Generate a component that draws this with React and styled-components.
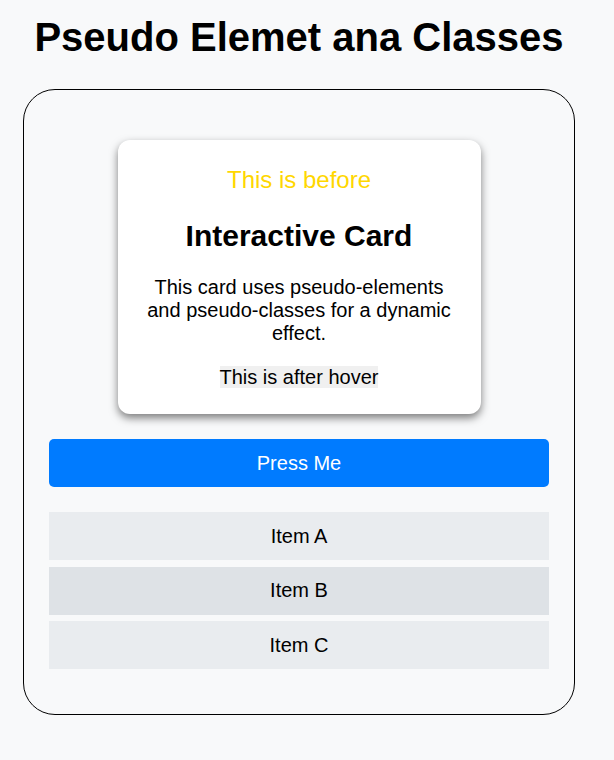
import styled, { createGlobalStyle } from 'styled-components'

// Page-wide defaults
const GlobalStyle = createGlobalStyle`
  html, body {
    margin: 0;
    padding: 0;
    background: #f8f9fa;
    font-family: 'Liberation Sans', Arial, sans-serif;
  }
`

const Page = styled.div`
  width: 598px;
  display: flex;
  flex-direction: column;
  align-items: center;
`

const Heading = styled.h1`
  font-size: 40px;
  font-weight: bold;
  color: #000;
  margin: 15px 0 29px;
  line-height: normal;
`

const Container = styled.div`
  box-sizing: border-box;
  width: 552px;
  padding: 50px 25px 45px;
  border: 1px solid #000;
  border-radius: 32px;
  display: flex;
  flex-direction: column;
  align-items: center;
`

const Card = styled.div`
  box-sizing: border-box;
  width: 363px;
  padding: 26px 20px 25px;
  margin-bottom: 25px;
  background: #fff;
  border-radius: 12px;
  box-shadow: 0 4px 8px rgba(0, 0, 0, 0.5);
  text-align: center;
  color: #000;
`

const Before = styled.div`
  font-size: 24px;
  color: #ffd700;
`

const CardTitle = styled.h2`
  font-size: 30px;
  font-weight: bold;
  margin: 25px 0 23px;
`

const Paragraph = styled.p`
  font-size: 20px;
  margin: 0 0 21px;
`

const After = styled.span`
  font-size: 20px;
  background: #f0f0f0;
`

const Button = styled.button`
  width: 100%;
  height: 48px;
  margin-bottom: 25px;
  border: none;
  border-radius: 5px;
  background: #007bff;
  color: #fff;
  font-family: inherit;
  font-size: 20px;
  cursor: pointer;
`

const List = styled.ul`
  width: 100%;
  margin: 0;
  padding: 0;
  list-style: none;
  display: flex;
  flex-direction: column;
  gap: 6.5px;
`

const Item = styled.li`
  height: 48px;
  display: flex;
  align-items: center;
  justify-content: center;
  font-size: 20px;
  color: #000;
  background: #e9ecef;

  &:nth-child(even) {
    background: #dee2e6;
  }
`

const App = () => {
  return (
    <Page>
      <GlobalStyle />
      <Heading>Pseudo Elemet ana Classes</Heading>
      <Container>
        <Card>
          <Before>This is before</Before>
          <CardTitle>Interactive Card</CardTitle>
          <Paragraph>
            This card uses pseudo-elements and pseudo-classes for a dynamic
            effect.
          </Paragraph>
          <div>
            <After>This is after hover</After>
          </div>
        </Card>
        <Button>Press Me</Button>
        <List>
          <Item>Item A</Item>
          <Item>Item B</Item>
          <Item>Item C</Item>
        </List>
      </Container>
    </Page>
  )
}

export default App
